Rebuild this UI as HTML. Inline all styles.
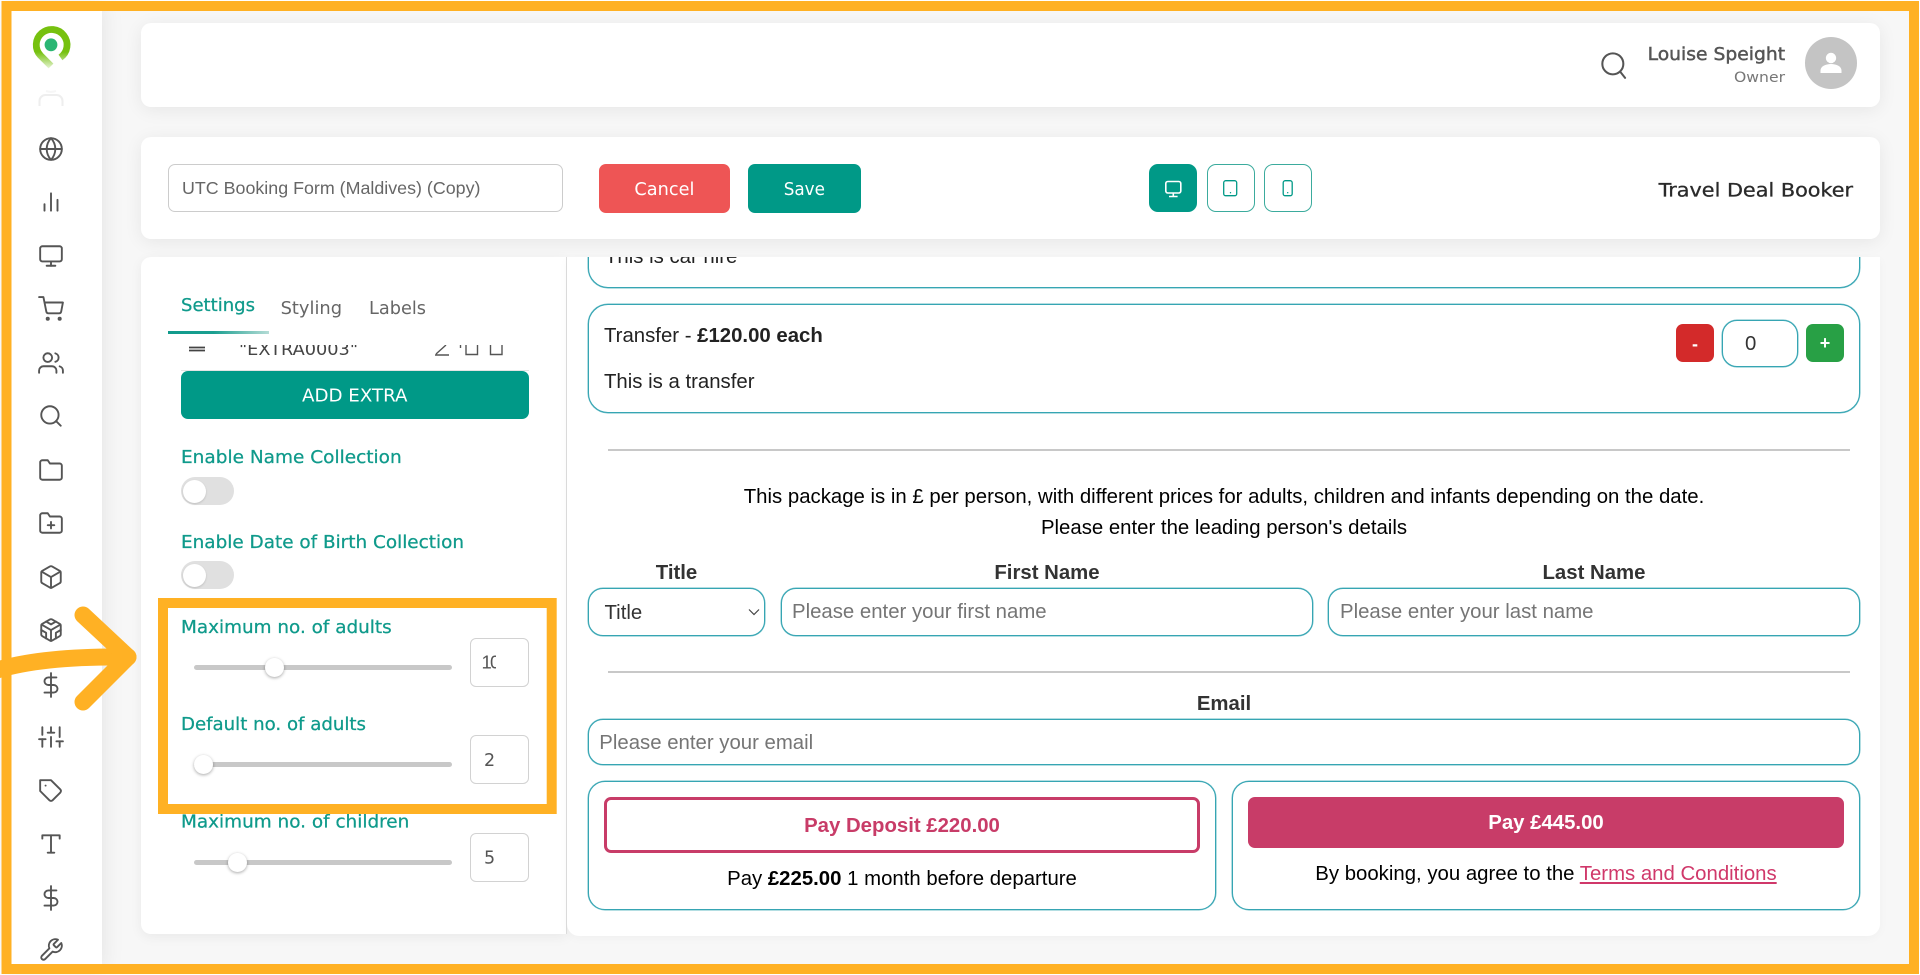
<!DOCTYPE html>
<html lang="en">
<head>
<meta charset="utf-8">
<title>Travel Deal Booker</title>
<style>
*{box-sizing:border-box}
html,body{margin:0;padding:0;width:1920px;height:975px;overflow:hidden;background:#fff;font-family:"Liberation Sans",Arial,sans-serif;color:#000}
.abs{position:absolute}
.a{position:absolute;line-height:24px;white-space:nowrap;font-size:20.36px}
#stage{position:absolute;left:0;top:0;width:1920px;height:975px;overflow:hidden}
#main{position:absolute;left:102px;top:5px;width:1812px;height:965px;background:#f7f7f7}
#side{position:absolute;left:5px;top:5px;width:97px;height:965px;background:#fff;box-shadow:0 0 22px rgba(0,0,0,.09)}
.card{position:absolute;background:#fff;border-radius:10px;box-shadow:0 3px 18px rgba(0,0,0,.07)}
.ic{position:absolute;width:26px;height:26px;left:38px;fill:none;stroke:#555;stroke-width:1.75;stroke-linecap:round;stroke-linejoin:round}
.box{position:absolute;border:1px solid #36a5b3;box-shadow:0 0 0 .5px rgba(54,165,179,.75);background:#fff}
.hr{position:absolute;height:2px;background:#c8c8c8;left:608px;width:1242px}
.btn{position:absolute;border-radius:7px}
.vb{position:absolute;top:164px;width:48px;height:48px;border:1.5px solid #3bab9d;border-radius:9px;background:#fff}
.tog{position:absolute;left:181px;width:53px;height:28px;border-radius:14px;background:#e0e0e0}
.tog i{position:absolute;left:2px;top:3px;width:23px;height:23px;border-radius:50%;background:#fff;box-shadow:0 1px 2px rgba(0,0,0,.15)}
.track{position:absolute;left:194px;width:258px;height:5px;border-radius:3px;background:#c8c8c8}
.thumb{position:absolute;width:19px;height:19px;border-radius:50%;background:#fff;box-shadow:0 1px 3px rgba(0,0,0,.35)}
.num{position:absolute;left:470px;width:59px;height:49px;border:1px solid #d2d2d2;border-radius:6px;background:#fff}
svg.t{position:absolute;left:0;top:0}
svg.t text{font-family:"DejaVu Sans","Liberation Sans",sans-serif;font-size:17.5px}
.teal{fill:#0f9a8b;stroke:#0f9a8b;stroke-width:.25}
.grey{fill:#666}
.ph{color:#757575}
</style>
</head>
<body>
<div id="stage">
  <div id="main"></div>

  <div class="card" style="left:141px;top:23px;width:1739px;height:84px"></div>
  <div class="card" style="left:141px;top:137px;width:1739px;height:102px"></div>

  <!-- left panel -->
  <div class="abs" style="left:141px;top:257px;width:426px;height:677px;background:#fff;border-radius:10px 0 0 10px;border-right:1px solid #ddd;box-shadow:0 3px 12px rgba(0,0,0,.06)"></div>

  <!-- right panel -->
  <div class="abs" style="left:567px;top:257px;width:1313px;height:679px;background:#fff;border-radius:0 0 12px 12px;overflow:hidden;box-shadow:0 2px 10px rgba(0,0,0,.03)">
    <div class="box" style="left:21px;top:-70px;width:1272px;height:101px;border-radius:20px"></div>
    <div class="a" style="left:38px;top:-12px;color:#222">This is car hire</div>
  </div>

  <!-- top bar -->
  <svg class="abs" style="left:1600px;top:50.700px;width:28px;height:28px;fill:none;stroke:#555;stroke-width:1.75;stroke-linecap:round" viewBox="0 0 24 24"><circle cx="11" cy="11" r="9"/><line x1="21.500" y1="23" x2="17.500" y2="18"/></svg>
  <div class="abs" style="left:1805px;top:37px;width:52px;height:51.500px;border-radius:50%;background:#c4c4c4"></div>
  <svg class="abs" style="left:1805px;top:37px" width="52" height="52" viewBox="0 0 52 52"><circle cx="26" cy="21" r="5.200" fill="#fff"/><path d="M15.500 36v-2.500c0-4 5-6.500 10.500-6.500s10.500 2.500 10.500 6.500V36z" fill="#fff"/></svg>

  <!-- booking name + buttons -->
  <div class="abs" style="left:168px;top:164px;width:394.500px;height:48px;border:1.5px solid #ccc;border-radius:7px;background:#fff"></div>
  <div class="a" style="left:182px;top:175.500px;font-size:17.850px;color:#666">UTC Booking Form (Maldives) (Copy)</div>
  <div class="btn" style="left:599px;top:164px;width:131px;height:49px;background:#ee5555"></div>
  <div class="btn" style="left:748px;top:164px;width:113px;height:49px;background:#009987"></div>

  <div class="vb" style="left:1149px;background:#009987;border-color:#009987"></div>
  <div class="vb" style="left:1206.500px"></div>
  <div class="vb" style="left:1264px"></div>
  <svg class="abs" style="left:1149px;top:164px" width="170" height="48" viewBox="0 0 170 48" fill="none">
    <rect x="16.800" y="17.500" width="15" height="11.500" rx="2" stroke="#fff" stroke-width="1.600"/>
    <path d="M24.300 29v3M20 32.500h8.600" stroke="#fff" stroke-width="1.600"/>
    <rect x="74.700" y="16.700" width="13" height="15" rx="2" stroke="#009987" stroke-width="1.300"/>
    <circle cx="81.500" cy="28.700" r=".7" fill="#009987"/>
    <rect x="134.200" y="16.700" width="9" height="15" rx="2" stroke="#009987" stroke-width="1.300"/>
    <circle cx="138.700" cy="28.700" r=".7" fill="#009987"/>
  </svg>

  <!-- tab underline -->
  <div class="abs" style="left:168px;top:331px;width:101px;height:3px;background:linear-gradient(90deg,#109a8c 0%,#1a9f90 45%,#b5dcd6 100%)"></div>

  <!-- clipped row -->
  <svg class="abs" style="left:170px;top:345px;overflow:hidden" width="350" height="15" viewBox="0 0 350 15" fill="none">
    <path d="M19 2.500h16M19 5.500h16" stroke="#444" stroke-width="1.800"/>
    <text x="69" y="10" textLength="119" lengthAdjust="spacingAndGlyphs" style="font-family:'DejaVu Sans',sans-serif;font-size:17px" fill="#444">"EXTRA0003"</text>
    <path d="M266 9l10-9M265 10h14" stroke="#555" stroke-width="1.400"/>
    <path d="M290.500 0v3" stroke="#555" stroke-width="1.400"/>
    <path d="M296 0v9.500h11.500V0" stroke="#555" stroke-width="1.400"/>
    <path d="M320.500 0v9.500h11.500V0" stroke="#555" stroke-width="1.400"/>
  </svg>
  <div class="abs" style="left:181px;top:370px;width:348px;height:1px;background:#e4e4e4"></div>
  <div class="btn" style="left:181px;top:371px;width:348px;height:48px;background:#009987"></div>

  <!-- toggles -->
  <div class="tog" style="top:477px"><i></i></div>
  <div class="tog" style="top:561px"><i></i></div>

  <!-- sliders -->
  <div class="track" style="top:664.500px"></div><div class="thumb" style="left:264.500px;top:657.500px"></div>
  <div class="num" style="top:638px"></div>
  <div class="track" style="top:761.500px"></div><div class="thumb" style="left:193.500px;top:754.500px"></div>
  <div class="num" style="top:735px"></div>
  <div class="track" style="top:859.500px"></div><div class="thumb" style="left:227.500px;top:852.500px"></div>
  <div class="num" style="top:833px"></div>

  <!-- Montserrat-like text -->
  <svg class="t" width="1920" height="975" viewBox="0 0 1920 975">
    <text x="181" y="311" textLength="74" lengthAdjust="spacingAndGlyphs" class="teal">Settings</text>
    <text x="280.600" y="314" textLength="61.500" lengthAdjust="spacingAndGlyphs" class="grey">Styling</text>
    <text x="369" y="314" textLength="57" lengthAdjust="spacingAndGlyphs" class="grey">Labels</text>
    <text x="302" y="401.700" textLength="105.500" lengthAdjust="spacingAndGlyphs" fill="#fff">ADD EXTRA</text>
    <text x="634.400" y="195" textLength="60" lengthAdjust="spacingAndGlyphs" fill="#fff">Cancel</text>
    <text x="783.700" y="195" textLength="41.300" lengthAdjust="spacingAndGlyphs" fill="#fff">Save</text>
    <text x="181" y="462.800" textLength="220.700" lengthAdjust="spacingAndGlyphs" class="teal">Enable Name Collection</text>
    <text x="181" y="547.800" textLength="283" lengthAdjust="spacingAndGlyphs" class="teal">Enable Date of Birth Collection</text>
    <text x="181" y="632.800" textLength="210.700" lengthAdjust="spacingAndGlyphs" class="teal">Maximum no. of adults</text>
    <text x="181" y="730.200" textLength="185" lengthAdjust="spacingAndGlyphs" class="teal">Default no. of adults</text>
    <text x="181" y="827.500" textLength="228.300" lengthAdjust="spacingAndGlyphs" class="teal">Maximum no. of children</text>
    <clipPath id="c10"><rect x="480" y="640" width="16" height="45"/></clipPath>
    <text x="481.500 490" y="668.700" fill="#555" clip-path="url(#c10)" style="font-family:'Liberation Sans',sans-serif;font-size:18.500px">10</text>
    <text x="484" y="766" fill="#555">2</text>
    <text x="484" y="863.300" fill="#555">5</text>
    <text x="1647.600" y="60" textLength="137.500" lengthAdjust="spacingAndGlyphs" fill="#555" stroke="#555" stroke-width=".45">Louise Speight</text>
    <text x="1734" y="82" textLength="51" lengthAdjust="spacingAndGlyphs" fill="#777" style="font-size:14.500px">Owner</text>
    <text x="1658.600" y="196.700" textLength="194.500" lengthAdjust="spacingAndGlyphs" fill="#2a2a2a" stroke="#2a2a2a" stroke-width=".3" style="font-size:18.500px">Travel Deal Booker</text>
  </svg>

  <!-- transfer card -->
  <div class="box" style="left:588px;top:304px;width:1272px;height:109px;border-radius:20px"></div>
  <div class="a" style="left:604px;top:324.300px;color:#222">Transfer - <b>£120.00 each</b></div>
  <div class="a" style="left:604px;top:370px;color:#222">This is a transfer</div>
  <div class="btn" style="left:1676px;top:324px;width:38px;height:38px;background:#d32a2a"></div>
  <div class="a" style="left:1676px;top:332px;width:38px;text-align:center;color:#fff;font-weight:700;font-size:18px">-</div>
  <div class="box" style="left:1722px;top:320px;width:76px;height:47px;border-radius:15px"></div>
  <div class="a" style="left:1745px;top:331.800px;color:#333">0</div>
  <div class="btn" style="left:1806px;top:324px;width:38px;height:38px;background:#28a045"></div>
  <div class="a" style="left:1806px;top:330.500px;width:38px;text-align:center;color:#fff;font-weight:700;font-size:18px">+</div>

  <div class="hr" style="top:448.500px"></div>
  <div class="a" style="left:588px;width:1272px;text-align:center;top:485.300px">This package is in £ per person, with different prices for adults, children and infants depending on the date.</div>
  <div class="a" style="left:588px;width:1272px;text-align:center;top:515.500px">Please enter the leading person's details</div>

  <div class="a" style="left:588px;width:177px;text-align:center;top:561.300px;font-weight:700;color:#333">Title</div>
  <div class="a" style="left:781px;width:532px;text-align:center;top:561.300px;font-weight:700;color:#333">First Name</div>
  <div class="a" style="left:1328px;width:532px;text-align:center;top:561.300px;font-weight:700;color:#333">Last Name</div>

  <div class="box" style="left:588px;top:588px;width:177px;height:48px;border-radius:15px"></div>
  <div class="a" style="left:604.500px;top:600.800px;color:#333">Title</div>
  <svg class="abs" style="left:748px;top:608px" width="12" height="8" viewBox="0 0 12 8" fill="none"><path d="M1 1.500l5 5 5-5" stroke="#444" stroke-width="1.200"/></svg>
  <div class="box" style="left:781px;top:588px;width:532px;height:48px;border-radius:15px"></div>
  <div class="a ph" style="left:792px;top:600px">Please enter your first name</div>
  <div class="box" style="left:1328px;top:588px;width:532px;height:48px;border-radius:15px"></div>
  <div class="a ph" style="left:1340px;top:600px">Please enter your last name</div>

  <div class="hr" style="top:671px"></div>
  <div class="a" style="left:588px;width:1272px;text-align:center;top:691.700px;font-weight:700;color:#333">Email</div>
  <div class="box" style="left:588px;top:719px;width:1272px;height:46px;border-radius:15px"></div>
  <div class="a ph" style="left:599.300px;top:730.500px">Please enter your email</div>

  <!-- payment -->
  <div class="box" style="left:588px;top:781px;width:628px;height:129px;border-radius:17px"></div>
  <div class="abs" style="left:604px;top:797px;width:596px;height:56px;border:3px solid #c83c68;border-radius:7px;background:#fff"></div>
  <div class="a" style="left:604px;width:596px;text-align:center;top:813.500px;font-weight:700;color:#c83c68">Pay Deposit £220.00</div>
  <div class="a" style="left:588px;width:628px;text-align:center;top:866.700px">Pay <b>£225.00</b> 1 month before departure</div>

  <div class="box" style="left:1232px;top:781px;width:628px;height:129px;border-radius:17px"></div>
  <div class="abs" style="left:1248px;top:797px;width:596px;height:51px;background:#c83c68;border-radius:7px"></div>
  <div class="a" style="left:1248px;width:596px;text-align:center;top:811px;font-weight:700;color:#fff">Pay £445.00</div>
  <div class="a" style="left:1232px;width:628px;text-align:center;top:861.700px">By booking, you agree to the <span style="color:#d0386a;text-decoration:underline">Terms and Conditions</span></div>

  <!-- sidebar -->
  <div id="side"></div>
  <svg class="abs" style="left:25px;top:20px" width="52" height="56" viewBox="25 20 52 56" fill="none">
    <defs><linearGradient id="lg" x1="0" y1="52" x2="0" y2="69" gradientUnits="userSpaceOnUse"><stop offset="0" stop-color="#76c10f"/><stop offset="1" stop-color="#76c10f" stop-opacity=".15"/></linearGradient></defs>
    <path d="M60.500 57.500A15.400 15.400 0 1 0 40.500 55.500L51 66" stroke="url(#lg)" stroke-width="6.800"/>
    <circle cx="51" cy="44.800" r="6.400" fill="#2bb673"/>
  </svg>
  <svg class="abs" style="left:34px;top:86px" width="34" height="22" viewBox="0 0 34 22" fill="none" stroke="#eeeeee" stroke-width="2"><path d="M5.500 20v-5a6 6 0 0 1 6-6h11a6 6 0 0 1 6 6v5"/><path d="M12 5c3 1 7 1 10 0" stroke="#f6f6f6"/></svg>

  <svg class="ic" style="top:136.300px" viewBox="0 0 24 24"><circle cx="12" cy="12" r="10"/><line x1="2" y1="12" x2="22" y2="12"/><path d="M12 2a15.300 15.300 0 0 1 4 10 15.300 15.300 0 0 1-4 10 15.300 15.300 0 0 1-4-10 15.300 15.300 0 0 1 4-10z"/></svg>
  <svg class="ic" style="top:189px" viewBox="0 0 24 24"><line x1="18" y1="20" x2="18" y2="10"/><line x1="12" y1="20" x2="12" y2="4"/><line x1="6" y1="20" x2="6" y2="14"/></svg>
  <svg class="ic" style="top:243px" viewBox="0 0 24 24"><rect x="2" y="3" width="20" height="14" rx="2"/><line x1="8" y1="21" x2="16" y2="21"/><line x1="12" y1="17" x2="12" y2="21"/></svg>
  <svg class="ic" style="top:296px" viewBox="0 0 24 24"><circle cx="9" cy="21" r="1"/><circle cx="20" cy="21" r="1"/><path d="M1 1h4l2.680 13.390a2 2 0 0 0 2 1.610h9.720a2 2 0 0 0 2-1.610L23 6H6"/></svg>
  <svg class="ic" style="top:350px" viewBox="0 0 24 24"><path d="M17 21v-2a4 4 0 0 0-4-4H5a4 4 0 0 0-4 4v2"/><circle cx="9" cy="7" r="4"/><path d="M23 21v-2a4 4 0 0 0-3-3.870"/><path d="M16 3.130a4 4 0 0 1 0 7.750"/></svg>
  <svg class="ic" style="top:402.700px" viewBox="0 0 24 24"><circle cx="11" cy="11" r="8"/><line x1="21" y1="21" x2="16.650" y2="16.650"/></svg>
  <svg class="ic" style="top:457px" viewBox="0 0 24 24"><path d="M22 19a2 2 0 0 1-2 2H4a2 2 0 0 1-2-2V5a2 2 0 0 1 2-2h5l2 3h9a2 2 0 0 1 2 2z"/></svg>
  <svg class="ic" style="top:510px" viewBox="0 0 24 24"><path d="M22 19a2 2 0 0 1-2 2H4a2 2 0 0 1-2-2V5a2 2 0 0 1 2-2h5l2 3h9a2 2 0 0 1 2 2z"/><line x1="12" y1="11" x2="12" y2="17"/><line x1="9" y1="14" x2="15" y2="14"/></svg>
  <svg class="ic" style="top:563.700px" viewBox="0 0 24 24"><path d="M21 16V8a2 2 0 0 0-1-1.730l-7-4a2 2 0 0 0-2 0l-7 4A2 2 0 0 0 3 8v8a2 2 0 0 0 1 1.730l7 4a2 2 0 0 0 2 0l7-4A2 2 0 0 0 21 16z"/><polyline points="3.270 6.960 12 12.010 20.730 6.960"/><line x1="12" y1="22.080" x2="12" y2="12"/></svg>
  <svg class="ic" style="top:617px" viewBox="0 0 24 24"><path d="M21 16V8a2 2 0 0 0-1-1.730l-7-4a2 2 0 0 0-2 0l-7 4A2 2 0 0 0 3 8v8a2 2 0 0 0 1 1.730l7 4a2 2 0 0 0 2 0l7-4A2 2 0 0 0 21 16z"/><polyline points="7.500 4.210 12 6.810 16.500 4.210"/><polyline points="7.500 19.790 7.500 14.600 3 12"/><polyline points="21 12 16.500 14.600 16.500 19.790"/><polyline points="3.270 6.960 12 12.010 20.730 6.960"/><line x1="12" y1="22.080" x2="12" y2="12"/></svg>
  <svg class="ic" style="top:671.500px" viewBox="0 0 24 24"><line x1="12" y1="1" x2="12" y2="23"/><path d="M17 5H9.500a3.500 3.500 0 0 0 0 7h5a3.500 3.500 0 0 1 0 7H6"/></svg>
  <svg class="ic" style="top:723.700px" viewBox="0 0 24 24"><line x1="4" y1="21" x2="4" y2="14"/><line x1="4" y1="10" x2="4" y2="3"/><line x1="12" y1="21" x2="12" y2="12"/><line x1="12" y1="8" x2="12" y2="3"/><line x1="20" y1="21" x2="20" y2="16"/><line x1="20" y1="12" x2="20" y2="3"/><line x1="1" y1="14" x2="7" y2="14"/><line x1="9" y1="8" x2="15" y2="8"/><line x1="17" y1="16" x2="23" y2="16"/></svg>
  <svg class="ic" style="top:778px" viewBox="0 0 24 24"><path d="M20.590 13.410l-7.170 7.170a2 2 0 0 1-2.830 0L2 12V2h10l8.590 8.590a2 2 0 0 1 0 2.820z"/><line x1="7" y1="7" x2="7.010" y2="7"/></svg>
  <svg class="ic" style="top:831px" viewBox="0 0 24 24"><polyline points="4 7 4 4 20 4 20 7"/><line x1="9" y1="20" x2="15" y2="20"/><line x1="12" y1="4" x2="12" y2="20"/></svg>
  <svg class="ic" style="top:884.700px" viewBox="0 0 24 24"><line x1="12" y1="1" x2="12" y2="23"/><path d="M17 5H9.500a3.500 3.500 0 0 0 0 7h5a3.500 3.500 0 0 1 0 7H6"/></svg>
  <svg class="ic" style="top:937px" viewBox="0 0 24 24"><path d="M14.700 6.300a1 1 0 0 0 0 1.400l1.600 1.600a1 1 0 0 0 1.400 0l3.770-3.770a6 6 0 0 1-7.940 7.940l-6.910 6.910a2.120 2.120 0 0 1-3-3l6.910-6.910a6 6 0 0 1 7.940-7.940l-3.760 3.760z"/></svg>

  <!-- orange annotations -->
  <svg class="abs" style="left:0;top:0" width="1920" height="975" viewBox="0 0 1920 975" fill="none">
    <rect x="6.500" y="6" width="1907.500" height="963" stroke="#ffb124" stroke-width="10"/>
    <rect x="163" y="603" width="388.700" height="206" stroke="#ffb124" stroke-width="10"/>
    <path d="M-6 671Q40 656 128 657" stroke="#ffb124" stroke-width="17" stroke-linecap="round"/>
    <path d="M83 615L128 657L83 702" stroke="#ffb124" stroke-width="17" stroke-linecap="round" stroke-linejoin="round"/>
  </svg>
</div>
</body>
</html>
